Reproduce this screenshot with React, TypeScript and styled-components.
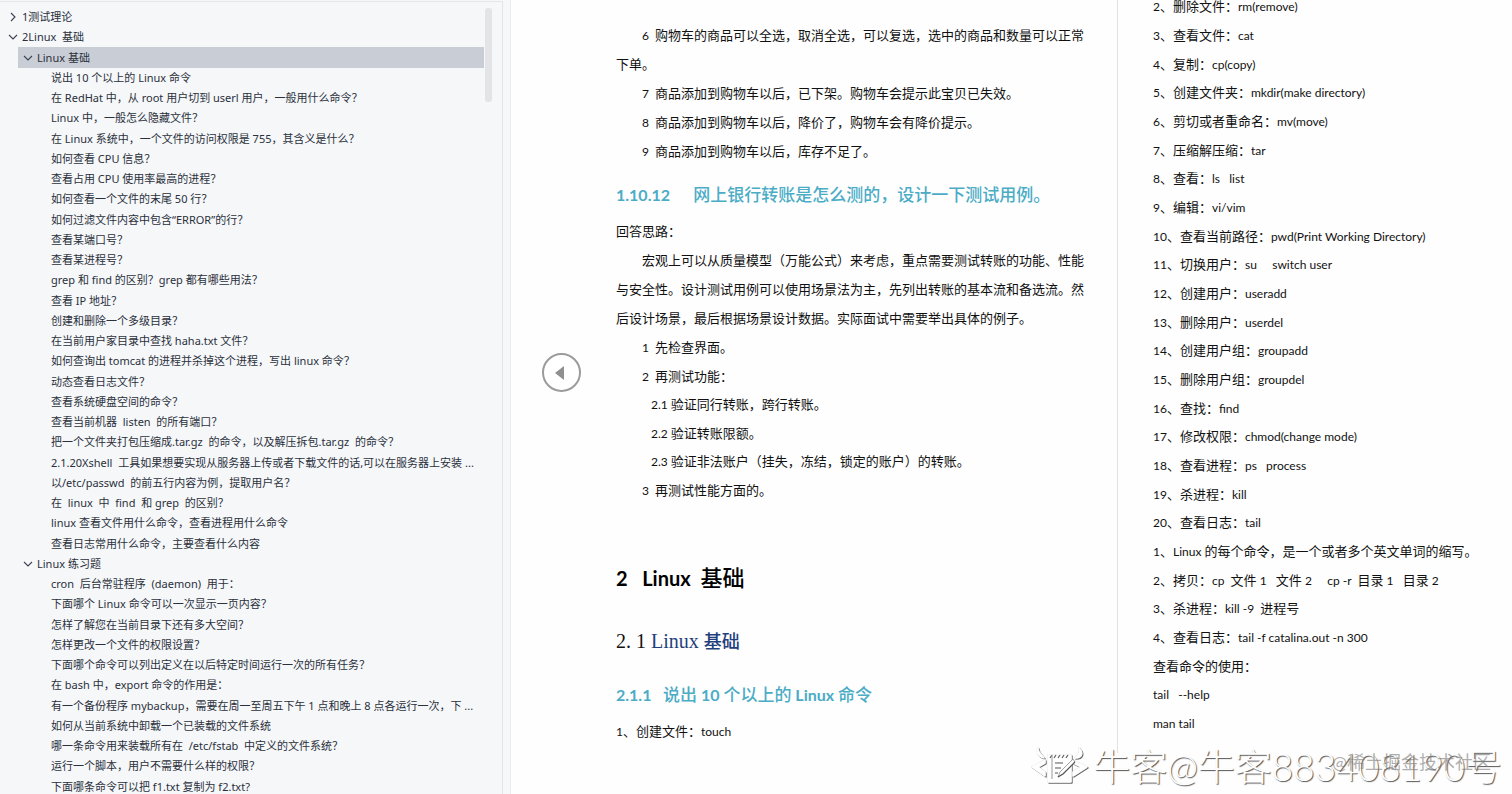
import React, { Fragment } from "react";
import styled, { createGlobalStyle, css } from "styled-components";

const GlobalStyle = createGlobalStyle`
  *, *::before, *::after { box-sizing: border-box; }
  body { margin: 0; background: #fff; }
  h1, h2, h3, p, ul { margin: 0; padding: 0; }
  ul { list-style: none; }
`;

const Shell = styled.div`
  position: relative;
  display: grid;
  grid-template-columns: 511px minmax(0, 606fr) minmax(0, 395fr);
  grid-template-rows: minmax(0, 1fr);
  height: 100vh;
  overflow: hidden;
  background: #fefefe;
  color: #111;
  font-family: "Noto Sans CJK SC", sans-serif;
`;

/* ---------- outline panel ---------- */

const Sidebar = styled.nav`
  padding: 1px 7px 0 0;
  background: #f5f7f9;
  border-right: 1px solid #ebeced;
  overflow: hidden;
`;

const SidebarFrame = styled.div`
  display: flex;
  height: 100%;
  gap: 1px;
  padding-right: 10px;
  border-top: 1px solid #e4e6ea;
  border-right: 1px solid #e2e4e8;
`;

const Tree = styled.ul`
  flex: 1;
  min-width: 0;
  padding-top: 5px;
`;

const ScrollThumb = styled.div`
  flex: 0 0 7px;
  height: 94px;
  margin-top: 6px;
  border-radius: 3px;
  background: #e2e4e8;
`;

const TreeItem = styled.li<{ $level: number }>`
  height: 20px;
  padding-left: ${(p) => [3, 3, 18, 51][p.$level]}px;

  &:nth-child(4n + 3) {
    height: 21px;
  }
`;

const rowStyle = css`
  display: flex;
  align-items: center;
  width: 100%;
  height: 100%;
  border: 0;
  padding: 0;
  background: none;
  color: #2b303b;
  font: 11px/20px "Noto Sans", "Noto Sans CJK SC", sans-serif;
  text-align: left;
  text-decoration: none;
`;

const Branch = styled.button<{ $selected?: boolean }>`
  ${rowStyle}
  gap: 4px;
  padding-left: 5px;
  background: ${(p) => (p.$selected ? "#c8cdd6" : "none")};
`;

const Leaf = styled.a`
  ${rowStyle}
`;

const RowText = styled.span`
  overflow: hidden;
  text-overflow: ellipsis;
  white-space: pre;
`;

const Chevron = ({ open }: { open: boolean }) => (
  <svg width="10" height="10" viewBox="0 0 10 10" fill="none" stroke="#3c4250" strokeWidth="1.1" aria-hidden="true">
    <path d={open ? "M1 3l4 4 4-4" : "M3 1l4 4-4 4"} />
  </svg>
);

/* ---------- document pages ---------- */

const Page = styled.main`
  padding: 20px 30px 0 105px;
`;

const SidePage = styled.section`
  height: 762px;
  margin-top: -9px;
  padding-left: 35px;
  border-left: 1px solid #e2e2e2;
`;

const Para = styled.p<{ $indent?: boolean }>`
  font-size: 13px;
  line-height: 29px;
  text-indent: ${(p) => (p.$indent ? 26 : 0)}px;
  white-space: pre-wrap;
`;

const Item = styled.li<{ $indent?: number }>`
  height: 29px;
  padding-left: ${(p) => p.$indent ?? 0}px;
  font-size: 13px;
  line-height: 29px;
  white-space: pre;
`;

const StepList = styled.ul`
  ${Item}:nth-child(even) {
    height: 28px;
  }
`;

const CommandList = styled.ul`
  ${Item}:nth-child(3n) {
    height: 28px;
  }
`;

const Latin = styled.span`
  font-family: Lato, "Noto Sans CJK SC", sans-serif;
  font-size: 12px;
  line-height: 1;
`;

const HeadLatin = styled(Latin)<{ $size: number }>`
  font-size: ${(p) => p.$size}px;
  font-weight: 700;
`;

const Title = styled.h1`
  margin-top: 57px;
  font-size: 22px;
  font-weight: 500;
  line-height: 32px;
  color: #000;
  white-space: pre;
`;

const Section = styled.h2`
  margin: 34px 0 8px;
  font: 500 18px/30px "Liberation Serif", "Noto Sans CJK SC", serif;
  color: #1f3f7d;
  white-space: pre;
`;

const SectionLatin = styled.span<{ $dark?: boolean }>`
  font-size: 20px;
  color: ${(p) => (p.$dark ? "#111" : "inherit")};
`;

const Topic = styled.h3`
  padding: 14px 0 7px;
  font-size: 17px;
  font-weight: 500;
  line-height: 30px;
  color: #4bacc6;
  white-space: pre;
`;

const PageButton = styled.button`
  position: absolute;
  top: 353px;
  left: 542px;
  display: grid;
  place-items: center;
  width: 39px;
  height: 39px;
  padding: 0;
  border: 2px solid #9b9b9b;
  border-radius: 50%;
  background: #fff;
`;

/* ---------- watermarks ---------- */

const Watermark = styled.div`
  position: absolute;
  right: 10px;
  bottom: 5px;
  display: flex;
  align-items: center;
  gap: 4px;
  font: 300 37px/44px Lato, "Noto Sans CJK SC", sans-serif;
  color: #fff;
  text-shadow: 1px 1px 1px #555;
  white-space: nowrap;
`;

const SmallMark = styled.div`
  position: absolute;
  right: 21px;
  bottom: 20px;
  font: 18px/24px Lato, "Noto Sans CJK SC", sans-serif;
  color: rgba(120, 120, 120, 0.6);
  white-space: nowrap;
`;

const logoOutline = (
  <>
    <path d="M15 13L2 20l13 9v-4l-7-5 7-4z" />
    <path d="M43 13l14 7-14 9v-4l8-5-8-4z" />
    <path d="M18 8h23v27H18z" />
    <path d="M8 1C6 6 9 10 14 11C13 8 8 7 8 1z" />
    <path d="M49 1c5 5 3 10-4 10c3-3 5-5 4-10z" />
  </>
);

const Logo = () => (
  <svg width="59" height="40" viewBox="0 0 59 40" fill="none" strokeLinejoin="round" aria-hidden="true">
    <g stroke="#666" strokeWidth="1.4" transform="translate(1 1)">{logoOutline}</g>
    <g stroke="#e4e4e4" strokeWidth="1.6">{logoOutline}</g>
    <g fill="#fff" stroke="#fff" strokeWidth="1">{logoOutline}</g>
    <path d="M20 11l2-3M24 11l2-3M28 11l2-3M32 11l2-3M36 11l2-3" stroke="#666" strokeWidth="1.3" />
    <path d="M22 8v24" stroke="#999" strokeWidth="1" />
    <path d="M25 16h8M25 21h6M25 26h3" stroke="#555" strokeWidth="1.2" />
    <path d="M43 12L30 25l-2 5 5-3L45 15z" fill="#fff" stroke="#888" strokeWidth="0.8" />
    <path d="M45 15L33 27l-5 3" stroke="#555" strokeWidth="1.2" />
  </svg>
);

/* ---------- content ---------- */

type Node = { level: 1 | 2 | 3; text: string; open?: boolean; selected?: boolean };

const leaf = (text: string): Node => ({ level: 3, text });

const outline: Node[] = [
  { level: 1, text: "1测试理论", open: false },
  { level: 1, text: "2Linux  基础", open: true },
  { level: 2, text: "Linux 基础", open: true, selected: true },
  ...[
    "说出 10 个以上的 Linux 命令",
    "在 RedHat 中，从 root 用户切到 userl 用户，一般用什么命令？",
    "Linux 中，一般怎么隐藏文件？",
    "在 Linux 系统中，一个文件的访问权限是 755，其含义是什么？",
    "如何查看 CPU 信息？",
    "查看占用 CPU 使用率最高的进程？",
    "如何查看一个文件的末尾 50 行？",
    "如何过滤文件内容中包含“ERROR”的行？",
    "查看某端口号？",
    "查看某进程号？",
    "grep 和 find 的区别？grep 都有哪些用法？",
    "查看 IP 地址？",
    "创建和删除一个多级目录？",
    "在当前用户家目录中查找 haha.txt 文件？",
    "如何查询出 tomcat 的进程并杀掉这个进程，写出 linux 命令？",
    "动态查看日志文件？",
    "查看系统硬盘空间的命令？",
    "查看当前机器  listen  的所有端口？",
    "把一个文件夹打包压缩成.tar.gz  的命令，以及解压拆包.tar.gz  的命令？",
    "2.1.20Xshell  工具如果想要实现从服务器上传或者下载文件的话,可以在服务器上安装 ...",
    "以/etc/passwd  的前五行内容为例，提取用户名？",
    "在  linux  中  find  和 grep  的区别？",
    "linux 查看文件用什么命令，查看进程用什么命令",
    "查看日志常用什么命令，主要查看什么内容",
  ].map(leaf),
  { level: 2, text: "Linux 练习题", open: true },
  ...[
    "cron  后台常驻程序  (daemon)  用于：",
    "下面哪个 Linux 命令可以一次显示一页内容？",
    "怎样了解您在当前目录下还有多大空间？",
    "怎样更改一个文件的权限设置？",
    "下面哪个命令可以列出定义在以后特定时间运行一次的所有任务？",
    "在 bash 中，export 命令的作用是：",
    "有一个备份程序 mybackup，需要在周一至周五下午 1 点和晚上 8 点各运行一次，下 ...",
    "如何从当前系统中卸载一个已装载的文件系统",
    "哪一条命令用来装载所有在  /etc/fstab  中定义的文件系统？",
    "运行一个脚本，用户不需要什么样的权限？",
    "下面哪条命令可以把 f1.txt 复制为 f2.txt?",
  ].map(leaf),
];

const cartLines = [
  "7  商品添加到购物车以后，已下架。购物车会提示此宝贝已失效。",
  "8  商品添加到购物车以后，降价了，购物车会有降价提示。",
  "9  商品添加到购物车以后，库存不足了。",
];

const steps: [number, string][] = [
  [26, "1  先检查界面。"],
  [26, "2  再测试功能："],
  [35, "2.1 验证同行转账，跨行转账。"],
  [35, "2.2 验证转账限额。"],
  [35, "2.3 验证非法账户（挂失，冻结，锁定的账户）的转账。"],
  [26, "3  再测试性能方面的。"],
];

const commands = [
  "2、删除文件：rm(remove)",
  "3、查看文件：cat",
  "4、复制：cp(copy)",
  "5、创建文件夹：mkdir(make directory)",
  "6、剪切或者重命名：mv(move)",
  "7、压缩解压缩：tar",
  "8、查看：ls   list",
  "9、编辑：vi/vim",
  "10、查看当前路径：pwd(Print Working Directory)",
  "11、切换用户：su     switch user",
  "12、创建用户：useradd",
  "13、删除用户：userdel",
  "14、创建用户组：groupadd",
  "15、删除用户组：groupdel",
  "16、查找：find",
  "17、修改权限：chmod(change mode)",
  "18、查看进程：ps   process",
  "19、杀进程：kill",
  "20、查看日志：tail",
  "1、Linux 的每个命令，是一个或者多个英文单词的缩写。",
  "2、拷贝：cp  文件 1   文件 2     cp -r  目录 1   目录 2",
  "3、杀进程：kill -9  进程号",
  "4、查看日志：tail -f catalina.out -n 300",
  "查看命令的使用：",
  "tail   --help",
  "man tail",
];

/* Latin runs are set in their own face and size beside the Chinese text. */
const Mixed = ({ text, head }: { text: string; head?: number }) => (
  <>
    {text.split(/([ -~]+)/).map((run, i) =>
      i % 2 === 0 ? (
        <Fragment key={i}>{run}</Fragment>
      ) : head ? (
        <HeadLatin key={i} $size={head}>{run}</HeadLatin>
      ) : (
        <Latin key={i}>{run}</Latin>
      )
    )}
  </>
);

export default function App() {
  return (
    <Shell>
      <GlobalStyle />
      <Sidebar aria-label="目录">
        <SidebarFrame>
          <Tree>
            {outline.map((n) => (
              <TreeItem key={n.text} $level={n.level}>
                {n.level === 3 ? (
                  <Leaf href="#">
                    <RowText>{n.text}</RowText>
                  </Leaf>
                ) : (
                  <Branch type="button" aria-expanded={n.open} $selected={n.selected}>
                    <Chevron open={!!n.open} />
                    <RowText>{n.text}</RowText>
                  </Branch>
                )}
              </TreeItem>
            ))}
          </Tree>
          <ScrollThumb />
        </SidebarFrame>
      </Sidebar>

      <Page>
        <Para $indent>
          <Mixed text="6  购物车的商品可以全选，取消全选，可以复选，选中的商品和数量可以正常下单。" />
        </Para>
        {cartLines.map((t) => (
          <Para key={t} $indent>
            <Mixed text={t} />
          </Para>
        ))}
        <Topic>
          <Mixed head={16} text="1.10.12      网上银行转账是怎么测的，设计一下测试用例。" />
        </Topic>
        <Para>回答思路：</Para>
        <Para $indent>
          宏观上可以从质量模型（万能公式）来考虑，重点需要测试转账的功能、性能与安全性。设计测试用例可以使用场景法为主，先列出转账的基本流和备选流。然后设计场景，最后根据场景设计数据。实际面试中需要举出具体的例子。
        </Para>
        <StepList>
          {steps.map(([indent, t]) => (
            <Item key={t} $indent={indent}>
              <Mixed text={t} />
            </Item>
          ))}
        </StepList>
        <Title>
          <Mixed head={20} text="2   Linux  基础" />
        </Title>
        <Section>
          <SectionLatin $dark>2. 1 </SectionLatin>
          <SectionLatin>Linux </SectionLatin>
          基础
        </Section>
        <Topic>
          <Mixed head={16} text="2.1.1   说出 10 个以上的 Linux 命令" />
        </Topic>
        <Para>
          <Mixed text="1、创建文件：touch" />
        </Para>
      </Page>

      <SidePage>
        <CommandList>
          {commands.map((t) => (
            <Item key={t}>
              <Mixed text={t} />
            </Item>
          ))}
        </CommandList>
      </SidePage>

      <PageButton type="button" aria-label="上一页">
        <svg width="13" height="14" viewBox="0 0 13 14" aria-hidden="true">
          <path d="M9 0v14L0 7z" fill="#8f8f8f" />
        </svg>
      </PageButton>

      <Watermark>
        <Logo />
        <span>牛客@牛客883408190号</span>
      </Watermark>
      <SmallMark>@稀土掘金技术社区</SmallMark>
    </Shell>
  );
}
